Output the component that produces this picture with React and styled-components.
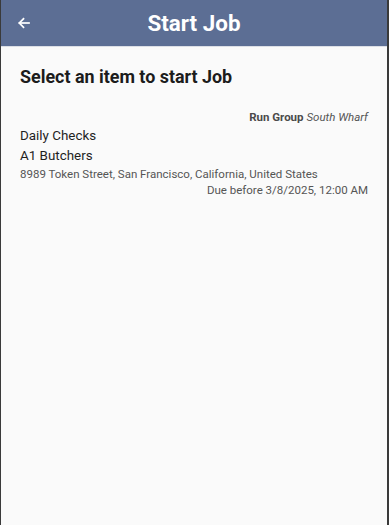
import React from "react";
import styled, { createGlobalStyle } from "styled-components";

const Global = createGlobalStyle`
  html, body { margin: 0; padding: 0; height: 100%; }
  body { font-family: Roboto, "Noto Sans", sans-serif; background: #3a3a3a; }
  #root { height: 100%; }
`;

const Frame = styled.div`
  height: 525px;
  margin: 0 2px 0 1px;
  background: #fafafa;
  display: flex;
  flex-direction: column;
`;

const Header = styled.header`
  height: 46px;
  background: #5c6e94;
  display: grid;
  grid-template-columns: 46px 1fr 46px;
  align-items: center;
  border-bottom: 1px solid #dcdfe6;
`;

const BackButton = styled.button`
  background: none;
  border: none;
  padding: 0;
  color: #fff;
  display: flex;
  align-items: center;
  justify-content: center;
  width: 46px;
  height: 46px;
`;

const Title = styled.h1`
  margin: 0;
  text-align: center;
  color: #fff;
  font-size: 22.4px;
  font-weight: 700;
`;

const Content = styled.main`
  padding: 17px 19px 0 19px;
  display: flex;
  flex-direction: column;
`;

const Heading = styled.h2`
  margin: 0 0 20px 0;
  font-size: 17.9px;
  font-weight: 700;
  color: #1c1c1c;
  line-height: 26px;
`;

const Item = styled.div`
  display: flex;
  flex-direction: column;
`;

const RightLine = styled.div`
  text-align: right;
  font-size: 11.5px;
  line-height: ${p => p.$lh || 16}px;
  color: #555;
`;

const Label = styled.span`
  font-weight: 700;
  color: #4a4a4a;
`;

const Italic = styled.span`
  font-style: italic;
  color: #555;
`;

const Line = styled.div`
  font-size: ${p => p.$size}px;
  color: ${p => p.$color};
  line-height: ${p => p.$lh}px;
`;

export default function App() {
  return (
    <>
      <Global />
      <Frame>
        <Header>
          <BackButton aria-label="Back">
            <svg width="12" height="12" viewBox="0 0 12 12" fill="none" stroke="#fff" strokeWidth="1.7" strokeLinecap="square">
              <path d="M1.5 6H11" />
              <path d="M5.5 1.8L1.3 6l4.2 4.2" />
            </svg>
          </BackButton>
          <Title>Start Job</Title>
          <span />
        </Header>
        <Content>
          <Heading>Select an item to start Job</Heading>
          <Item>
            <RightLine $lh={15}>
              <Label>Run Group</Label> <Italic>South Wharf</Italic>
            </RightLine>
            <Line $size={13.4} $color="#1f1f1f" $lh={21}>Daily Checks</Line>
            <Line $size={13.4} $color="#1f1f1f" $lh={20}>A1 Butchers</Line>
            <Line $size={11.5} $color="#555" $lh={16}>8989 Token Street, San Francisco, California, United States</Line>
            <RightLine $lh={16}>Due before 3/8/2025, 12:00 AM</RightLine>
          </Item>
        </Content>
      </Frame>
    </>
  );
}
